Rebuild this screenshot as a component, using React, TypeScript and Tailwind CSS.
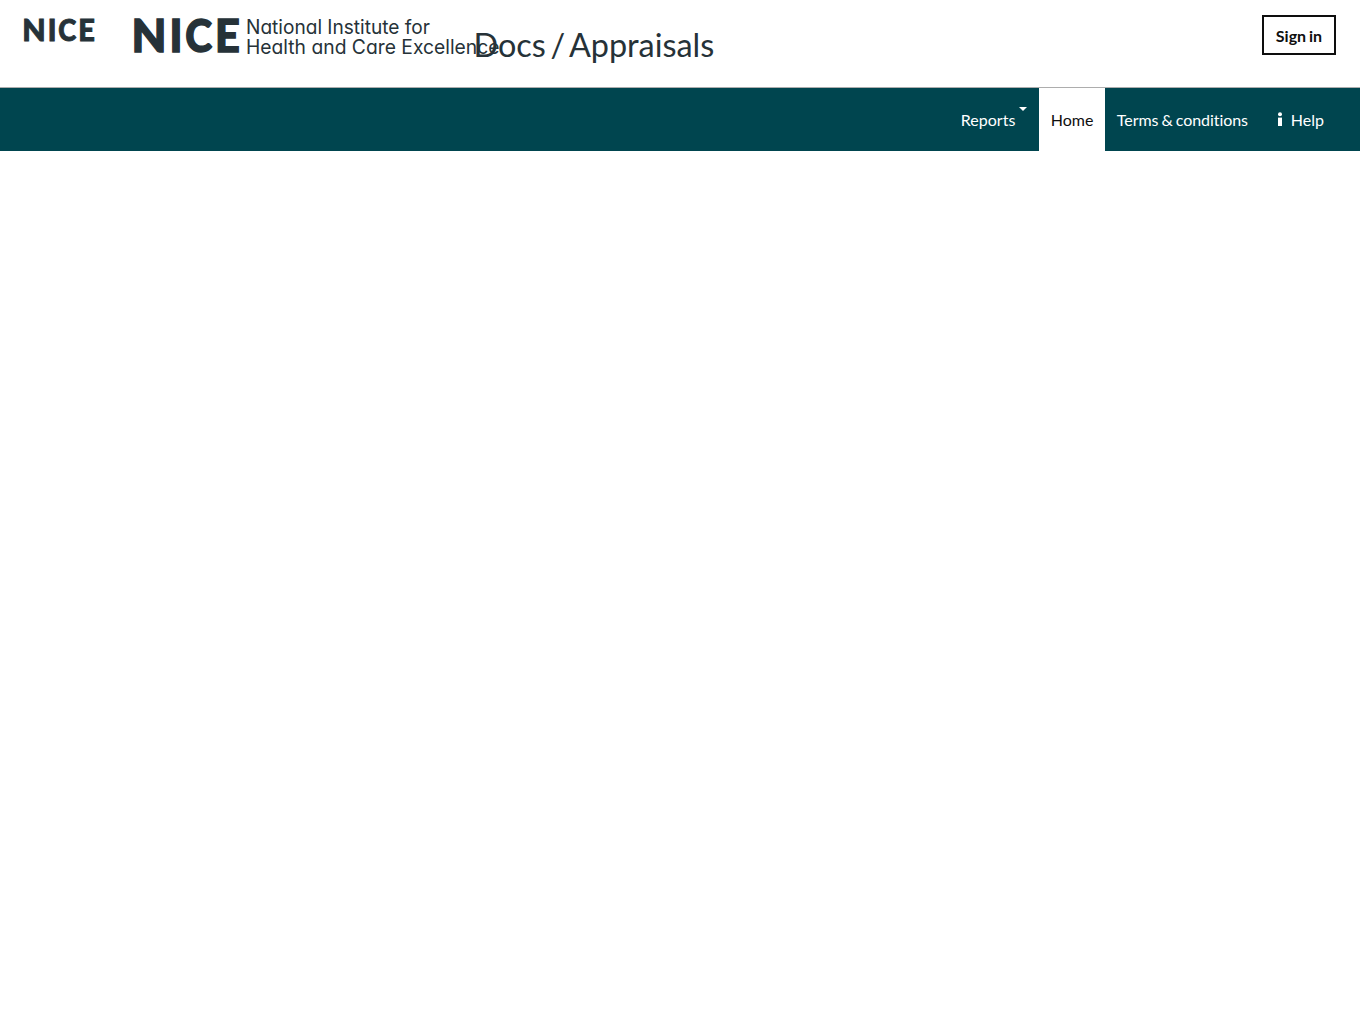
const LETTERS = [
  { c: "N", x: -2.6, w: 35 },
  { c: "I", x: 35.6, w: 13 },
  { c: "C", x: 51.2, w: 26.8 },
  { c: "E", x: 81, w: 24.8 },
];

function NiceLetters() {
  return (
    <g className="fill-[#263238] stroke-[#263238] font-['Lato',sans-serif] text-[45.5px] font-black" strokeWidth="1.4">
      {LETTERS.map((l) => (
        <text key={l.c} x={l.x} y="33.2" textLength={l.w} lengthAdjust="spacingAndGlyphs">
          {l.c}
        </text>
      ))}
    </g>
  );
}

function NiceMark() {
  return (
    <svg className="h-[23px] w-[71px] overflow-visible" viewBox="0 0 106 34" preserveAspectRatio="xMinYMin" aria-label="NICE">
      <NiceLetters />
    </svg>
  );
}

function NiceLogo() {
  return (
    <svg className="h-[36px] w-[328px] overflow-visible" viewBox="0 0 328 36" aria-label="NICE">
      <NiceLetters />
      <g className="fill-[#263238] font-['Inter',sans-serif] text-[19.5px] font-normal [font-feature-settings:'cv11'] [word-spacing:0px]">
        <text x="112" y="15" textLength="184" lengthAdjust="spacingAndGlyphs">
          National Institute for
        </text>
        <text x="112" y="35" textLength="253.5" lengthAdjust="spacingAndGlyphs">
          Health and Care Excellence
        </text>
      </g>
    </svg>
  );
}

export default function App() {
  return (
    <div className="min-h-screen bg-white font-['Lato',sans-serif] text-base text-[#0e0e0e] [font-variant-ligatures:none] [word-spacing:-1px]">
      <header className="flex h-[88px] items-start border-b border-[#adadad] px-6">
        <a href="#" className="mt-[19px] block w-[110px]">
          <NiceMark />
        </a>
        <a href="#" className="mt-[19px] block w-[339.5px]">
          <NiceLogo />
        </a>
        <h1 className="mt-[25px] whitespace-nowrap text-[32.4px] leading-10 text-[#263238] [word-spacing:-3.5px]">Docs / Appraisals</h1>
        <a href="#" className="ml-auto mt-[15px] flex h-10 w-[74px] items-center justify-center whitespace-nowrap border-2 border-[#0e0e0e] pt-0.5 font-bold leading-6">
          Sign in
        </a>
      </header>
      <nav className="flex h-[63px] justify-end bg-[#00454f] pr-6 leading-6 text-white">
        <a href="#" className="flex w-[90px] items-start justify-between pl-3 pr-3 pt-5">
          Reports
          <span className="-mt-px h-0 w-0 border-x-4 border-t-4 border-x-transparent border-t-white" />
        </a>
        <a href="#" className="w-[66px] bg-white px-3 pt-5 text-[#0e0e0e]">Home</a>
        <a href="#" className="w-[155px] whitespace-nowrap px-3 pt-5 tracking-[-0.06px]">Terms &amp; conditions</a>
        <a href="#" className="flex items-start pl-[18px] pr-3 pt-5">
          <svg className="mr-[9px] mt-1 h-[14px] w-1" viewBox="0 0 4 14" fill="currentColor">
            <circle cx="2" cy="2.2" r="2" />
            <rect y="5.6" width="4" height="8.4" />
          </svg>
          Help
        </a>
      </nav>
    </div>
  );
}
